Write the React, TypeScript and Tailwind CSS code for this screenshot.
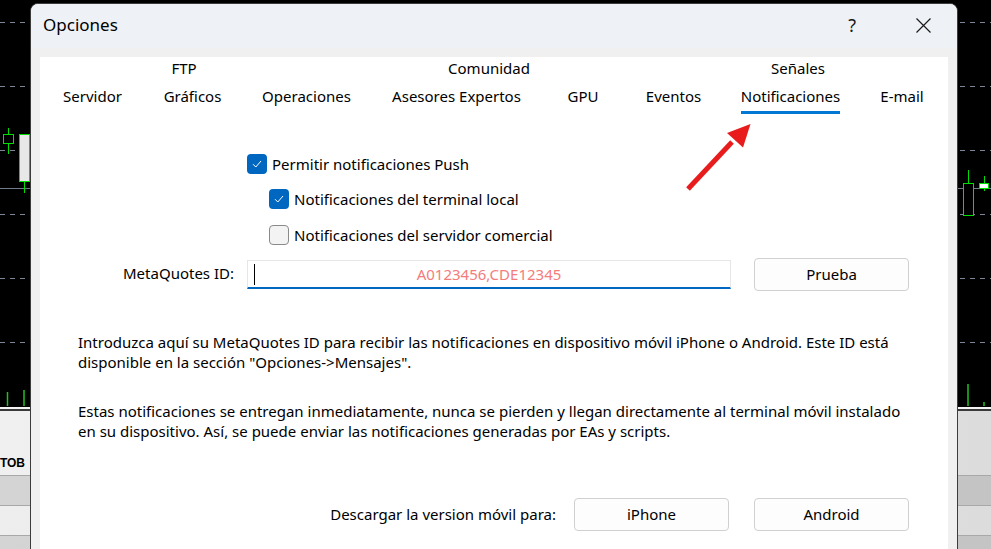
import React from "react";

const font = { fontFamily: '"Noto Sans", "Segoe UI", sans-serif' };

function Check() {
  return (
    <span className="flex h-[20px] w-[20px] shrink-0 items-center justify-center rounded-[4px] bg-[#0067c0]">
      <svg width="10" height="8" viewBox="0 0 10 8">
        <path d="M1 4.2 L3.8 7 L9 1" fill="none" stroke="#ffffff" strokeWidth="1" />
      </svg>
    </span>
  );
}

function Uncheck() {
  return <span className="h-[20px] w-[20px] shrink-0 rounded-[4px] border border-[#8a8a8a] bg-[#f3f3f3]" />;
}

function Btn({ label, w = "w-[155px]" }: { label: string; w?: string }) {
  return (
    <div className={`flex h-[33px] ${w} items-center justify-center rounded-[4px] border border-[#d0d0d0] bg-[#fdfdfd] pb-[1px] text-[15px] text-black`}>
      {label}
    </div>
  );
}

function Background() {
  const dashed = [22, 86, 150, 214, 278, 342];
  return (
    <div className="absolute inset-0 flex flex-col">
      <div className="h-[407px] w-full bg-black">
        <svg width="991" height="407" viewBox="0 0 991 407">
          {dashed.map((y) => (
            <line key={y} x1="0" y1={y + 0.5} x2="991" y2={y + 0.5} stroke="#7a8696" strokeWidth="1" strokeDasharray="5 5" />
          ))}
          <line x1="0" y1="188.5" x2="991" y2="188.5" stroke="#6f7b8a" strokeWidth="1" />
          {/* left candles */}
          <line x1="8.5" y1="128" x2="8.5" y2="154" stroke="#00e000" strokeWidth="1" />
          <rect x="3.5" y="134.5" width="10" height="9" fill="#000" stroke="#00e000" strokeWidth="1" />
          <line x1="24.5" y1="181" x2="24.5" y2="193" stroke="#00e000" strokeWidth="1" />
          <rect x="19.5" y="134.5" width="10" height="47" fill="#e8e8e8" stroke="#00e000" strokeWidth="1" />
          <line x1="7.5" y1="392" x2="7.5" y2="406" stroke="#22c022" strokeWidth="1.5" />
          <line x1="24" y1="390" x2="24" y2="406" stroke="#22c022" strokeWidth="1.5" />
          {/* right candles */}
          <line x1="968.5" y1="170" x2="968.5" y2="216" stroke="#00e000" strokeWidth="1" />
          <rect x="963.5" y="183.5" width="10" height="32" fill="#000" stroke="#00e000" strokeWidth="1" />
          <line x1="984.5" y1="176" x2="984.5" y2="191" stroke="#00e000" strokeWidth="1" />
          <rect x="979.5" y="183.5" width="9" height="5" fill="#ffffff" stroke="#00e000" strokeWidth="1" />
          <line x1="968" y1="384" x2="968" y2="406" stroke="#22c022" strokeWidth="1.5" />
          <line x1="984" y1="402" x2="984" y2="406" stroke="#22c022" strokeWidth="1.5" />
        </svg>
      </div>
      <div className="h-[2px] w-full bg-[#f4f4f4]" />
      <div className="h-[2px] w-full bg-[#3a3a3a]" />
      <div className="flex h-[64px] w-full items-end bg-gradient-to-r from-[#f0f0f0] to-[#dcdcdc] pb-[6px]">
        <span className="text-[12px] font-bold leading-none text-black" style={{ fontFamily: '"Liberation Sans", sans-serif' }}>
          ТОВ
        </span>
      </div>
      <div className="h-[1px] w-full bg-[#a8a8a8]" />
      <div className="h-[29px] w-full bg-gradient-to-r from-[#d4d4d4] to-[#c4c4c4]" />
      <div className="h-[1px] w-full bg-[#a8a8a8]" />
      <div className="h-[29px] w-full bg-gradient-to-r from-[#eeeeee] to-[#dcdcdc]" />
      <div className="h-[1px] w-full bg-[#a8a8a8]" />
      <div className="flex-1 w-full bg-gradient-to-r from-[#d4d4d4] to-[#c4c4c4]" />
    </div>
  );
}

export default function App() {
  return (
    <div className="relative h-[549px] w-[991px] overflow-hidden bg-black" style={font}>
      <Background />
      {/* dialog */}
      <div className="absolute left-[30px] top-[3px] flex h-[560px] w-[928px] flex-col overflow-hidden rounded-t-[8px] border border-[#3c3c3c] bg-[#f0f0f0]">
        {/* title bar */}
        <div className="flex h-[44px] shrink-0 items-center bg-[#eef2f6] pb-[2px] pl-[12px]">
          <span className="text-[17px] text-black">Opciones</span>
          <span className="ml-auto mr-[60px] text-[18px] text-[#1a1a1a]">?</span>
          <svg width="15" height="15" viewBox="0 0 15 15" className="mr-[26px]">
            <path d="M0.5 0.5 L14.5 14.5 M14.5 0.5 L0.5 14.5" stroke="#1a1a1a" strokeWidth="1.2" />
          </svg>
        </div>
        {/* frame */}
        <div className="flex flex-1 flex-col px-[9px] pt-[9px]">
          <div className="relative flex flex-1 flex-col bg-white text-[15px] leading-[20px] text-black">
            {/* tabs */}
            <div className="flex flex-col pt-[1px]">
              <div className="flex h-[28px]">
                <div className="w-[104px]" />
                <div className="w-[80px] text-center">FTP</div>
                <div className="w-[200px]" />
                <div className="w-[130px] text-center">Comunidad</div>
                <div className="w-[194px]" />
                <div className="w-[100px] text-center">Señales</div>
              </div>
              <div className="flex">
                <div className="w-[105px] text-center">Servidor</div>
                <div className="w-[95px] text-center">Gráficos</div>
                <div className="w-[133px] text-center">Operaciones</div>
                <div className="w-[167px] text-center">Asesores Expertos</div>
                <div className="w-[86px] text-center">GPU</div>
                <div className="w-[95px] text-center">Eventos</div>
                <div className="flex w-[139px] justify-center">
                  <span className="border-b-[3px] border-[#0078d4] pb-[5px]">Notificaciones</span>
                </div>
                <div className="w-[84px] text-center">E-mail</div>
              </div>
            </div>

            {/* checkboxes */}
            <div className="mt-[40px] flex h-[20px] items-center gap-[5px] pl-[207px]">
              <Check />
              <span>Permitir notificaciones Push</span>
            </div>
            <div className="mt-[15px] flex h-[20px] items-center gap-[5px] pl-[229px]">
              <Check />
              <span>Notificaciones del terminal local</span>
            </div>
            <div className="mt-[16px] flex h-[20px] items-center gap-[5px] pl-[229px]">
              <Uncheck />
              <span>Notificaciones del servidor comercial</span>
            </div>

            {/* MetaQuotes ID row */}
            <div className="mt-[13px] flex h-[33px] items-center">
              <div className="mb-[4px] w-[194px] text-right">MetaQuotes ID:</div>
              <div className="ml-[13px] flex h-[29px] w-[484px] items-center border border-b-2 border-[#e6e6e6] border-b-[#0067c0] bg-white">
                <span className="ml-[6px] h-[21px] w-[1px] bg-black" />
                <span className="mb-[1px] flex-1 pr-[7px] text-center text-[#f47c7c]">A0123456,CDE12345</span>
              </div>
              <div className="ml-[23px]">
                <Btn label="Prueba" />
              </div>
            </div>

            {/* paragraphs */}
            <p className="mt-[42px] whitespace-nowrap pl-[38px] leading-[19.5px]">
              Introduzca aquí su MetaQuotes ID para recibir las notificaciones en dispositivo móvil iPhone o Android. Este ID está
              <br />
              disponible en la sección "Opciones-&gt;Mensajes".
            </p>
            <p className="mt-[30px] whitespace-nowrap pl-[38px] leading-[19.5px]">
              Estas notificaciones se entregan inmediatamente, nunca se pierden y llegan directamente al terminal móvil instalado
              <br />
              en su dispositivo. Así, se puede enviar las notificaciones generadas por EAs y scripts.
            </p>

            {/* download row */}
            <div className="mt-[57px] flex h-[33px] items-center">
              <div className="mb-[1px] w-[516px] text-right">Descargar la version móvil para:</div>
              <div className="ml-[18px]">
                <Btn label="iPhone" />
              </div>
              <div className="ml-[25px]">
                <Btn label="Android" />
              </div>
            </div>

            {/* red annotation arrow */}
            <svg className="pointer-events-none absolute left-[640px] top-[60px]" width="80" height="80" viewBox="640 60 80 80">
              <line x1="648" y1="132" x2="692" y2="85" stroke="#e81c1c" strokeWidth="5" />
              <polygon points="710.5,67 687,76 703,90.5" fill="#e81c1c" />
            </svg>
          </div>
        </div>
      </div>
    </div>
  );
}
